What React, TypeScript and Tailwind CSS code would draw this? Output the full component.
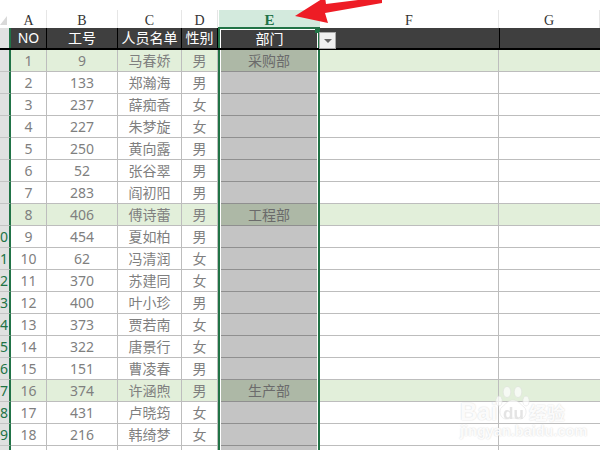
const ROWS: [number | '', number | '', string, string, string?][] = [
  [1, 9, '马春娇', '男', '采购部'],
  [2, 133, '郑瀚海', '男'],
  [3, 237, '薛痴香', '女'],
  [4, 227, '朱梦旋', '女'],
  [5, 250, '黄向露', '男'],
  [6, 52, '张谷翠', '男'],
  [7, 283, '阎初阳', '男'],
  [8, 406, '傅诗蕾', '男', '工程部'],
  [9, 454, '夏如柏', '男'],
  [10, 62, '冯清润', '女'],
  [11, 370, '苏建同', '女'],
  [12, 400, '叶小珍', '男'],
  [13, 373, '贾若南', '女'],
  [14, 322, '唐景行', '女'],
  [15, 151, '曹凌春', '男'],
  [16, 374, '许涵煦', '男', '生产部'],
  [17, 431, '卢晓筠', '女'],
  [18, 216, '韩绮梦', '女'],
  ['', '', '', ''],
];

const COLS = 'grid grid-cols-[11px_36px_71px_64px_36px_102px_179px_101px]';
const FONT = "font-['Noto_Sans','Noto_Sans_CJK_SC',sans-serif]";

function ColHead({ label, active }: { label: string; active?: boolean }) {
  return (
    <div
      className={`flex items-center justify-center pt-[3px] font-['Liberation_Serif',serif] leading-none ${
        active ? 'ml-px bg-[#d3eadd] text-[15px] font-bold text-[#217346]' : 'border-r border-[#e6e6e6] bg-white text-[14px] text-[#333]'
      }`}
    >
      {label}
    </div>
  );
}

function HeadCell({ children }: { children: React.ReactNode }) {
  return (
    <div className="flex items-center justify-center border-r border-black bg-[#3f3f3f] text-[14px] leading-none text-white">
      {children}
    </div>
  );
}

function Watermark() {
  const soft = '[text-shadow:0_0_1.5px_#d0d0d0] text-white/90';
  return (
    <div className="pointer-events-none absolute left-[458px] top-[384px] h-[54px] w-[112px]">
      <svg className="absolute left-[37px] top-[1px] opacity-70 blur-[0.4px]" width="36" height="36" viewBox="0 0 36 36" fill="#ffffff" stroke="#dcdcdc" strokeWidth="0.7">
        <ellipse cx="4" cy="16" rx="3.2" ry="5" />
        <ellipse cx="12" cy="7" rx="3.8" ry="5.5" />
        <ellipse cx="23" cy="7" rx="3.8" ry="5.5" />
        <ellipse cx="31" cy="16" rx="3.2" ry="5" />
        <path d="M18 15c-5 0-7 4-11 7-4 3-2 12 4 12 3 0 5-1 7-1s4 1 7 1c6 0 8-9 4-12-4-3-6-7-11-7z" />
      </svg>
      <div className={`absolute left-[2px] top-[16px] font-['Liberation_Sans',sans-serif] text-[24px] font-bold leading-none ${soft}`}>Bai</div>
      <div className="absolute left-[45px] top-[21px] font-['Liberation_Sans',sans-serif] text-[17px] font-bold leading-none text-[#e4e4e4] blur-[0.3px]">du</div>
      <div className={`absolute left-[71px] top-[19px] font-['Noto_Sans_CJK_SC',sans-serif] text-[18px] font-bold leading-none ${soft}`}>经验</div>
      <div className={`absolute left-[2px] top-[40px] whitespace-nowrap font-['Liberation_Sans',sans-serif] text-[14.5px] font-bold leading-none ${soft}`}>jingyan.baidu.com</div>
    </div>
  );
}

function Arrow() {
  return (
    <svg className="absolute left-[290px] top-0" width="95" height="26" viewBox="0 0 95 26">
      <path d="M5 16 L35 -3 L36 4 L92 -3 L92 3 L35 13 L38 23 Z" fill="#ee1c25" />
    </svg>
  );
}

export default function App() {
  return (
    <div className={`relative h-[450px] w-[600px] overflow-hidden bg-white ${FONT}`}>
      <div className="h-[10px]" />
      <div className={`${COLS} h-[17px]`}>
        <div className="relative bg-white">
          <div className="absolute bottom-[3px] left-0 h-0 w-0 border-b-[9px] border-l-[7px] border-b-[#d9d9d9] border-l-transparent" />
        </div>
        <ColHead label="A" />
        <ColHead label="B" />
        <ColHead label="C" />
        <ColHead label="D" />
        <ColHead label="E" active />
        <ColHead label="F" />
        <ColHead label="G" />
      </div>

      <div className={`${COLS} h-[23px] border-b-2 border-t border-b-black border-t-[#8a8a8a] bg-[#3f3f3f]`}>
        <div className="border-r-2 border-[#217346] bg-[#e1e1e1]" />
        <HeadCell>NO</HeadCell>
        <HeadCell>工号</HeadCell>
        <HeadCell>人员名单</HeadCell>
        <HeadCell>性别</HeadCell>
        <div className="relative -mt-px flex items-center justify-center border-x-2 border-t-2 border-[#217346] text-[14px] leading-none text-white">
          <div className="flex h-full w-full items-center justify-center border border-b-0 border-white pl-px">部门</div>
          <div className="absolute -right-[2px] -top-[1px] h-[5px] w-[5px] bg-[#217346]" />
          <div className="absolute -right-[18px] top-[3px] flex h-[17px] w-[17px] items-center justify-center border border-[#a9a9a9] bg-[#f0f0f0]">
            <div className="h-0 w-0 border-x-[4px] border-t-[4px] border-x-transparent border-t-[#666]" />
          </div>
        </div>
        <div />
        <div className="border-l border-black" />
      </div>

      {ROWS.map(([no, id, name, sex, dept], i) => {
        const band = dept ? 'bg-[#e2efda]' : 'bg-white';
        const cell = `flex items-center justify-center border-b border-r border-[#bdbdbd] text-[14px] leading-none text-[#7f7f7f] ${band}`;
        return (
          <div key={i} className={`${COLS} h-[22px]`}>
            <div className="flex items-center justify-start overflow-hidden border-b border-r-2 border-[#c4c4c4] border-r-[#217346] bg-[#e1e1e1] text-[14px] leading-none text-[#217346]">
              {typeof no === 'number' && no >= 9 ? (no + 1) % 10 : ''}
            </div>
            <div className={cell}>{no}</div>
            <div className={cell}>{id}</div>
            <div className={cell}>{name}</div>
            <div className={cell}>{sex}</div>
            <div className="flex items-center justify-center border-x-2 border-[#217346] bg-white text-[14px] leading-none text-[#6b6b6b]">
              <div className={`mx-px flex h-full w-full items-center justify-center border-b border-[#8f8f8f] ${dept ? 'bg-[#adb8a6]' : 'bg-[#c4c4c4]'}`}>
                {dept}
              </div>
            </div>
            <div className={cell} />
            <div className={`${cell} border-r-0`} />
          </div>
        );
      })}

      <Watermark />
      <Arrow />
    </div>
  );
}
